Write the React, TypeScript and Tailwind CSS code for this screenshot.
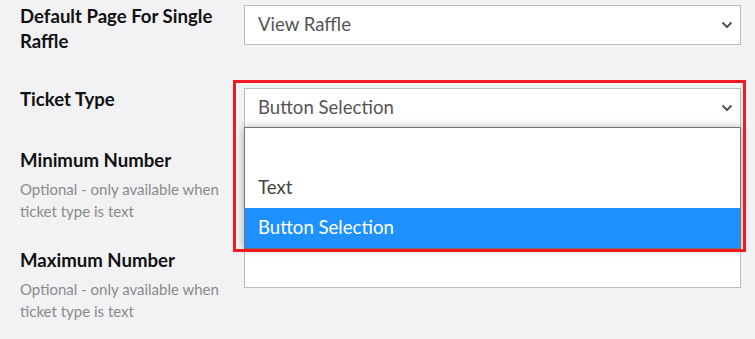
const Chevron = () => (
  <svg width="12" height="8" viewBox="0 0 12 8" className="shrink-0">
    <path d="M1.5 1.5 L6 6 L10.5 1.5" fill="none" stroke="#555" strokeWidth="2" />
  </svg>
);

function Select({ value }: { value: string }) {
  return (
    <div className="flex h-[40px] items-center justify-between border border-[#bcbcbc] bg-white pl-[13px] pr-[4px] text-[18.6px] text-[#555]">
      <span>{value}</span>
      <span className="mr-[1px] flex w-[16px] justify-center">
        <Chevron />
      </span>
    </div>
  );
}

function Label({ title, hint }: { title: string; hint?: string }) {
  return (
    <div className="w-[244px] shrink-0 pl-[20px] pr-[20px]">
      <div className="text-[18.6px] font-bold leading-[25px] text-[#111]">{title}</div>
      {hint && <div className="mt-[5px] text-[15px] leading-[22px] text-[#8a8a8a]">{hint}</div>}
    </div>
  );
}

const OPTIONS = ['', 'Text', 'Button Selection'];

export default function App() {
  const selected = 'Button Selection';

  return (
    <div className="h-[339px] w-[755px] overflow-hidden bg-[#f2f2f4] font-['Lato',sans-serif]">
      <div className="pr-[14px] pt-[4px]">
        <div className="flex">
          <Label title="Default Page For Single Raffle" />
          <div className="flex-1 pt-[1px]">
            <Select value="View Raffle" />
          </div>
        </div>

        <div className="mt-[33px] flex">
          <Label title="Ticket Type" />
          <div className="relative flex-1 pt-[1px]">
            <Select value={selected} />
            {/* open option list */}
            <div className="absolute left-0 right-0 top-[40px] z-10 border border-[#767676] bg-white text-[18.6px] shadow-[0_0_8px_rgba(0,0,0,0.3)]">
              {OPTIONS.map((o) => (
                <div
                  key={o}
                  className={
                    o === selected
                      ? 'flex h-[40px] items-center bg-[#1e90ff] pl-[13px] text-white'
                      : 'flex h-[40px] items-center pl-[13px] text-[#444]'
                  }
                >
                  {o}
                </div>
              ))}
            </div>
            {/* highlight frame */}
            <div className="pointer-events-none absolute -left-[11px] -right-[5px] -top-[7px] z-20 h-[172px] border-[3px] border-[#ed1c24]" />
          </div>
        </div>

        <div className="mt-[20px] flex">
          <Label title="Minimum Number" hint="Optional - only available when ticket type is text" />
          <div className="flex-1">
            <div className="h-[40px] border border-[#bcbcbc] bg-white" />
          </div>
        </div>

        <div className="mt-[26px] flex">
          <Label title="Maximum Number" hint="Optional - only available when ticket type is text" />
          <div className="flex-1">
            <div className="h-[40px] border border-[#bcbcbc] bg-white" />
          </div>
        </div>
      </div>
    </div>
  );
}
